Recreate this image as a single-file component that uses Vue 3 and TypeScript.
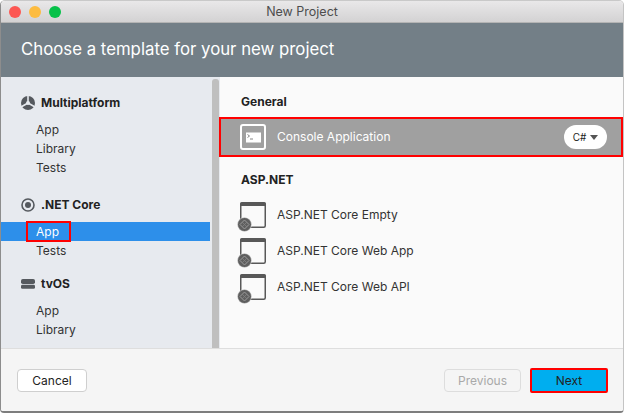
<script setup lang="ts">
const groups = [
  { name: 'Multiplatform', icon: 'multi', items: ['App', 'Library', 'Tests'] },
  { name: '.NET Core', icon: 'net', items: ['App', 'Tests'] },
  { name: 'tvOS', icon: 'tv', items: ['App', 'Library'] },
]
const aspRows = ['ASP.NET Core Empty', 'ASP.NET Core Web App', 'ASP.NET Core Web API']
</script>

<template>
  <div class="window">
    <div class="titlebar">
      <div class="lights">
        <span class="light red"></span>
        <span class="light yellow"></span>
        <span class="light green"></span>
      </div>
      <span class="title">New Project</span>
    </div>
    <div class="banner">Choose a template for your new project</div>
    <div class="main">
      <aside class="sidebar">
        <div class="tree">
          <section v-for="g in groups" :key="g.name" class="group">
            <h3 class="group-head">
              <svg v-if="g.icon === 'multi'" class="gicon" viewBox="0 0 14 14">
                <circle cx="7" cy="7" r="7" fill="#55595e" />
                <path d="M7 7V-1M7 7L14 11M7 7L0 11" stroke="#e7eaef" stroke-width="1.6" fill="none" />
                <circle cx="7" cy="7" r="2" fill="#e7eaef" />
              </svg>
              <svg v-else-if="g.icon === 'net'" class="gicon" viewBox="0 0 14 14">
                <circle cx="7" cy="7" r="6" fill="none" stroke="#55595e" stroke-width="1.6" />
                <circle cx="7" cy="7" r="3" fill="#55595e" />
              </svg>
              <svg v-else class="gicon" viewBox="0 0 14 14">
                <rect x="0" y="2" width="14" height="5" rx="1.8" fill="#55595e" />
                <rect x="0" y="7.8" width="14" height="4" rx="1.4" fill="#55595e" />
              </svg>
              {{ g.name }}
            </h3>
            <ul class="items">
              <li
                v-for="item in g.items"
                :key="item"
                class="item"
                :class="{ active: g.icon === 'net' && item === 'App' }"
              >
                {{ item }}
                <span v-if="g.icon === 'net' && item === 'App'" class="mark-app"></span>
              </li>
            </ul>
          </section>
        </div>
        <div class="track"><div class="thumb"></div></div>
      </aside>
      <div class="content">
        <h4 class="cat">General</h4>
        <div class="row selected">
          <svg class="ticon" viewBox="0 0 26 26">
            <rect x="1" y="1" width="24" height="24" rx="2" fill="none" stroke="#fff" stroke-width="2" />
            <rect x="6" y="8.500" width="15" height="10" fill="#fff" />
            <path d="M7.500 10.500l2 1.500-2 1.500M10 15h3" stroke="#777" stroke-width=".9" fill="none" />
          </svg>
          <span class="rname">Console Application</span>
          <span class="pill">C#<i class="caret"></i></span>
        </div>
        <h4 class="cat asp">ASP.NET</h4>
        <div v-for="r in aspRows" :key="r" class="row">
          <svg class="aicon" viewBox="0 0 30 30">
            <rect x="4.750" y="1" width="24.500" height="24.250" rx="1.500" fill="none" stroke="#585858" stroke-width="1.500" />
            <path d="M4 2q0-2 2-2h22q2 0 2 2v2H4z" fill="#585858" />
            <circle cx="8.500" cy="22.500" r="7" fill="#5f5f5f" stroke="#fafafa" stroke-width=".5" />
            <path d="M8.500 18l4.500 4.500-4.500 4.500-4.500-4.500z" fill="none" stroke="#9a9a9a" stroke-width="1" />
            <path d="M6 20l5 5M11 20l-5 5" stroke="#838383" stroke-width=".8" />
          </svg>
          <span class="rname">{{ r }}</span>
        </div>
      </div>
    </div>
    <footer class="footer">
      <button class="btn">Cancel</button>
      <div class="spacer"></div>
      <button class="btn disabled">Previous</button>
      <button class="btn next">Next</button>
    </footer>
  </div>
</template>

<style>
html, body { margin: 0; background: #fff; }
</style>

<style scoped>
* { box-sizing: border-box; }
.window {
  width: 624px;
  height: 413px;
  display: flex;
  flex-direction: column;
  border: 1px solid #8d8d8d;
  border-top-color: #c9c9c9;
  border-right-color: #c4c4c4;
  border-bottom: 2px solid #7d7d7d;
  border-radius: 5px 5px 4px 4px;
  overflow: hidden;
  font-family: Inter, "Liberation Sans", sans-serif;
  font-size: 12px;
  color: #222;
}
.titlebar {
  height: 22px;
  flex: none;
  display: flex;
  align-items: center;
  justify-content: center;
  padding-right: 20px;
  position: relative;
  background: linear-gradient(#e9e8e9, #d3d2d3);
  border-bottom: 1px solid #b4b4b4;
}
.title { font-size: 12.5px; color: #4d4d4d; }
.lights { position: absolute; left: 8px; top: 5px; display: flex; gap: 8px; }
.light { width: 12px; height: 12px; border-radius: 50%; }
.red { background: #fc5753; }
.yellow { background: #fdbc40; }
.green { background: #06c149; }
.banner {
  height: 54px;
  flex: none;
  padding: 0 0 3px 20px;
  display: flex;
  align-items: center;
  background: #737f87;
  color: #fff;
  font-size: 16.8px;
}
.main { flex: 1; display: flex; min-height: 0; }
.sidebar { width: 219px; flex: none; display: flex; background: #e7eaef; }
.tree { width: 209px; flex: none; padding-top: 16px; overflow: hidden; }
.track { flex: 1; padding: 2px 0 0 0; }
.thumb { width: 7px; height: 100%; margin-left: 2px; background: #bfbfbf; border-radius: 3px 3px 0 0; }
.group { margin-bottom: 18px; }
.group:nth-child(2) { margin-bottom: 14px; }
.group-head {
  margin: 0 0 8px;
  height: 19px;
  padding-left: 20px;
  display: flex;
  align-items: center;
  gap: 6px;
  font-size: 12px;
  font-weight: 700;
  color: #222;
}
.gicon { width: 14px; height: 14px; flex: none; }
.items { list-style: none; margin: 0; padding: 0; }
.item {
  height: 19px;
  line-height: 19px;
  padding-left: 35px;
  position: relative;
  color: #333;
}
.item.active { background: #2d8fea; color: #fff; }
.mark-app {
  position: absolute;
  left: 25px;
  top: -1px;
  width: 45px;
  height: 21px;
  border: 2px solid #f00;
}
.content { flex: 1; background: #fafafa; padding-top: 15px; }
.cat {
  margin: 0;
  height: 19px;
  line-height: 19px;
  padding-left: 21px;
  font-size: 12px;
  font-weight: 700;
  color: #222;
}
.asp { margin-top: 13px; margin-bottom: 7px; }
.row {
  height: 36px;
  display: flex;
  align-items: center;
  padding-left: 16px;
  color: #333;
}
.row.selected {
  height: 40px;
  margin: 6px 0 0 -1px;
  padding-left: 19px;
  padding-right: 14px;
  background: #a0a0a0;
  border: 2px solid #f00;
  color: #fff;
}
.selected .rname { padding-bottom: 2px; }
.ticon { width: 26px; height: 26px; flex: none; margin-right: 11px; }
.aicon { width: 30px; height: 30px; flex: none; margin: 6px 11px 0 0; }
.rname { flex: 1; }
.pill {
  width: 43px;
  height: 24px;
  border-radius: 12px;
  background: #fff;
  color: #222;
  font-size: 10px;
  display: flex;
  align-items: center;
  justify-content: center;
  gap: 4px;
}
.caret {
  width: 0;
  height: 0;
  border-left: 4px solid transparent;
  border-right: 4px solid transparent;
  border-top: 5px solid #555;
}
.footer {
  height: 63px;
  flex: none;
  display: flex;
  align-items: center;
  padding: 0 15px 0 16px;
  gap: 9px;
  background: #f5f5f5;
  border-top: 1px solid #dedede;
}
.spacer { flex: 1; }
.btn {
  width: 70px;
  height: 23px;
  font: inherit;
  color: #222;
  background: #fff;
  border: 1px solid #cfcfcf;
  border-radius: 4px;
  padding: 0;
}
.btn.disabled { width: 77px; color: #a9a9a9; background: #f5f5f5; border-color: #ddd; }
.btn.next {
  width: 78px;
  height: 25px;
  background: #00aeef;
  border: 2px solid #f00;
  border-radius: 2px;
  color: #222;
}
</style>
